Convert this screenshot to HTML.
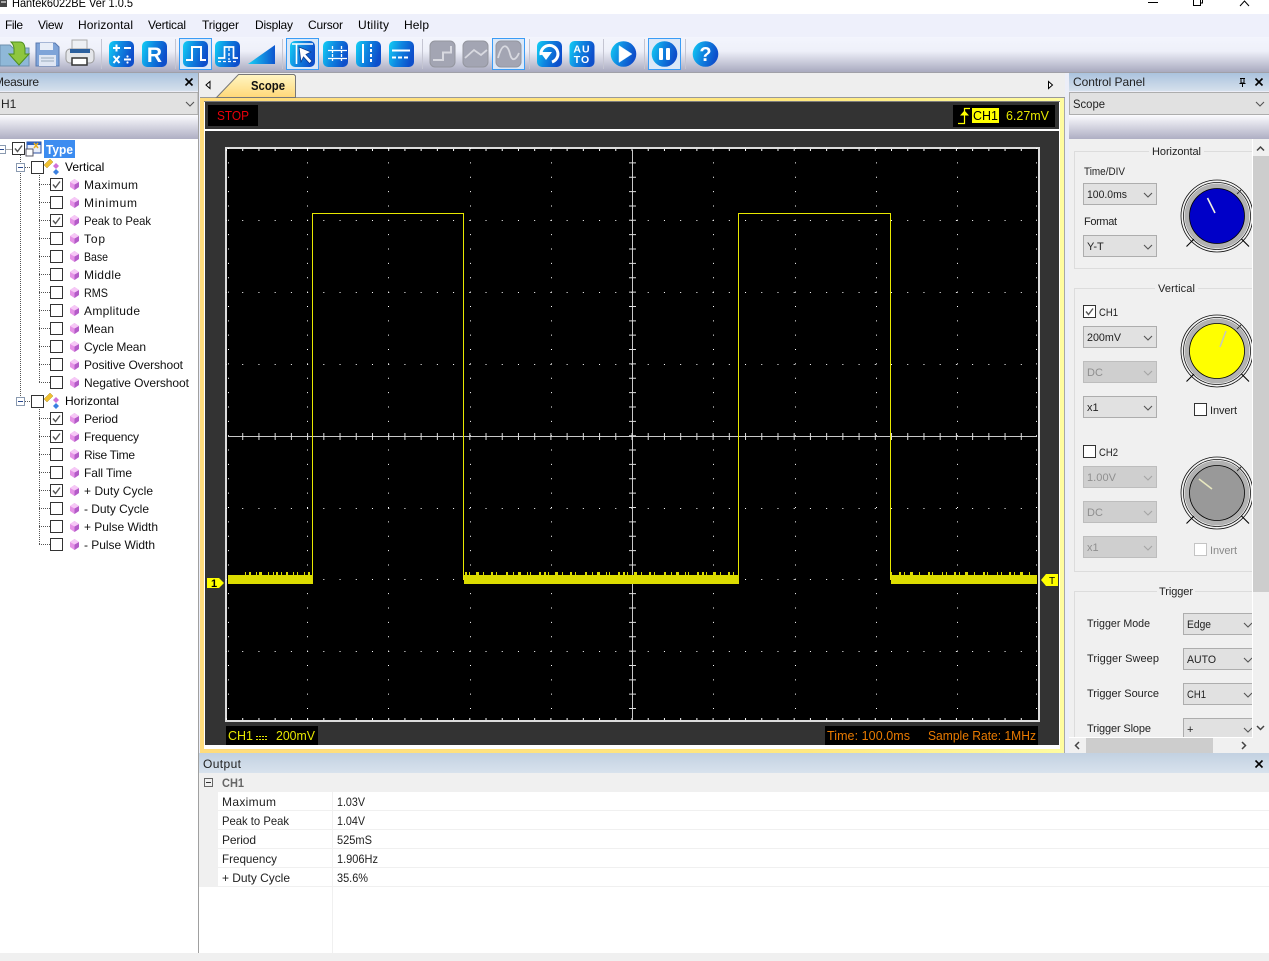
<!DOCTYPE html>
<html><head><meta charset="utf-8"><title>Hantek6022BE</title>
<style>
html,body{margin:0;padding:0;background:#fff;overflow:hidden}
svg{display:block;font-family:"Liberation Sans",sans-serif;font-size:12px}
</style></head><body>
<svg width="1269" height="961" viewBox="0 0 1269 961" xmlns="http://www.w3.org/2000/svg">
<defs>
<linearGradient id="tb" x1="0" y1="0" x2="0" y2="1"><stop offset="0" stop-color="#f3f5fd"/><stop offset=".4" stop-color="#eef0f9"/><stop offset="1" stop-color="#a9aabf"/></linearGradient>
<linearGradient id="hd" x1="0" y1="0" x2="0" y2="1"><stop offset="0" stop-color="#abc3de"/><stop offset="1" stop-color="#d5e0ec"/></linearGradient>
<linearGradient id="hd2" x1="0" y1="0" x2="0" y2="1"><stop offset="0" stop-color="#c2d1e1"/><stop offset="1" stop-color="#d8e2ed"/></linearGradient>
<linearGradient id="gb" x1="0" y1="0" x2="0" y2="1"><stop offset="0" stop-color="#fbfbfe"/><stop offset="1" stop-color="#aeaec3"/></linearGradient>
<linearGradient id="bl" x1="0" y1="0" x2="1" y2=".3"><stop offset="0" stop-color="#12d0f5"/><stop offset=".5" stop-color="#0f86e0"/><stop offset="1" stop-color="#0e4fcb"/></linearGradient>
<linearGradient id="fr" x1="0" y1="0" x2="1" y2="0"><stop offset="0" stop-color="#ffdc7c"/><stop offset=".7" stop-color="#ffe880"/><stop offset="1" stop-color="#fffca0"/></linearGradient>
<linearGradient id="tab" x1="0" y1="0" x2="0" y2="1"><stop offset="0" stop-color="#fff6c4"/><stop offset="1" stop-color="#ffd878"/></linearGradient>
<linearGradient id="tri" x1="0" y1="0" x2="1" y2="0"><stop offset="0" stop-color="#19d0f5"/><stop offset="1" stop-color="#0e55cf"/></linearGradient>
<clipPath id="cp"><rect x="1069" y="139" width="183" height="598"/></clipPath>
<rect id="bt" width="25" height="26" rx="5" fill="url(#bl)"/>
<rect id="bg" width="25" height="26" rx="5" fill="#a3a5b3" stroke="#94969f"/>
<g id="cb"><rect x=".5" y=".5" width="12" height="12" fill="#fff" stroke="#333"/></g>
<g id="ck"><rect x=".5" y=".5" width="12" height="12" fill="#fff" stroke="#333"/><polyline points="3,6.5 5.5,9.5 10,3.5" fill="none" stroke="#555" stroke-width="1.4"/></g>
<g id="di"><g transform="translate(0,-1)"><path d="M4.500 0L9 3V8L4.500 11L0 8V3Z" fill="#e592e6"/><path d="M4.500 5.500L9 3V8L4.500 11Z" fill="#b45cc8"/><path d="M4.500 0L9 3L4.500 5.500L0 3Z" fill="#f6c8f6"/></g></g>
<g id="ex"><rect x=".5" y=".5" width="8" height="8" fill="#fff" stroke="#8a9ab0"/><path d="M2 4.500H7" stroke="#2a4a90"/></g>
<g id="ch"><polyline points="0,0 4,4 8,0" fill="none" stroke="#555" stroke-width="1.1"/></g>
<g id="chd"><polyline points="0,0 4,4 8,0" fill="none" stroke="#a5a5a5" stroke-width="1.1"/></g>
<g id="cico"><path d="M0 6L6 0L9 3L3 9Z" fill="#f0c030" stroke="#a08020" stroke-width=".4"/><path d="M12 4L15 7L12 10L9 7Z" fill="#d070d8"/><path d="M12 10L15 13L12 16L9 13Z" fill="#3a80e0"/></g>
<g id="rings"><circle r="36" fill="#f4f4f4" stroke="#111" stroke-width=".8"/><circle r="33.500" fill="#fff" stroke="#111" stroke-width=".8"/><circle r="32.500" fill="#b2b2b2"/><path d="M-23 23L-30.500 30.500" stroke="#000" stroke-width="1.100"/><path d="M24.500 23L32 30.500" stroke="#000" stroke-width="1.100"/><path d="M20 -22L24 -26" stroke="#333"/></g>
</defs>

<!-- base -->
<rect width="1269" height="961" fill="#fff"/>
<rect y="14" width="1269" height="23" fill="#eef0fb"/>
<rect y="37" width="1269" height="35" fill="url(#tb)"/>
<rect y="72" width="1269" height="1" fill="#a0a0a8"/>
<rect y="73" width="1269" height="880" fill="#eceef8"/>

<!-- title bar -->
<rect x="0" y="0" width="7" height="7" fill="#444"/>
<rect x="1" y="1" width="5" height="2" fill="#aaa"/>
<text x="12" y="7" fill="#000" textLength="121" lengthAdjust="spacingAndGlyphs">Hantek6022BE Ver 1.0.5</text>
<path d="M1148 2.500H1158" stroke="#000"/>
<path d="M1193.500 0V5.500H1200.500V0M1200.500 3H1202.500V0" fill="none" stroke="#000"/>
<path d="M1240 6L1244.500 1L1249 6" fill="none" stroke="#000"/>

<!-- menu -->
<g fill="#000">
<text x="5" y="29" textLength="18">File</text><text x="38" y="29" textLength="25">View</text><text x="78" y="29" textLength="55">Horizontal</text><text x="148" y="29" textLength="38">Vertical</text><text x="202" y="29" textLength="37">Trigger</text><text x="255" y="29" textLength="38">Display</text><text x="308" y="29" textLength="35">Cursor</text><text x="358" y="29" textLength="31">Utility</text><text x="404" y="29" textLength="25">Help</text>
</g>

<!-- toolbar separators -->
<g fill="#c4c5d2">
<rect x="101" y="39" width="1" height="30"/><rect x="175" y="39" width="1" height="30"/><rect x="282" y="39" width="1" height="30"/><rect x="422" y="39" width="1" height="30"/><rect x="529" y="39" width="1" height="30"/><rect x="603" y="39" width="1" height="30"/><rect x="644" y="39" width="1" height="30"/><rect x="685" y="39" width="1" height="30"/>
</g>
<!-- pressed -->
<g fill="#dbe8f8" stroke="#3b9cf5">
<rect x="179.500" y="38.500" width="32" height="31"/><rect x="286.500" y="38.500" width="32" height="31"/><rect x="492.500" y="38.500" width="32" height="31"/><rect x="648.500" y="38.500" width="32" height="31"/>
</g>
<!-- folder -->
<path d="M0 45H10L13 48H29V66H0Z" fill="#8fb8d8" stroke="#6d8fae"/>
<path d="M11 42H20C24 42 25 46 25 50V54H29L19 65L9 54H14V49C14 46 13 44 11 42Z" fill="#8ec63f" stroke="#4f8f1f"/>
<!-- floppy -->
<path d="M36 43H55L59 47V66H36Z" fill="#7fa4d8" stroke="#5a7ab0"/>
<rect x="40" y="43" width="13" height="7" fill="#e8eef8"/><rect x="39" y="55" width="17" height="11" fill="#dfe6f3"/><path d="M41 58H54M41 61H54" stroke="#9ab"/>
<!-- printer -->
<rect x="72" y="40" width="15" height="10" fill="#eef0f4" stroke="#aaa"/>
<rect x="66" y="49" width="28" height="14" rx="4" fill="#e4e6ea" stroke="#999"/>
<rect x="70" y="49" width="20" height="4" fill="#2a5f9e"/>
<rect x="72" y="58" width="15" height="7" fill="#fff" stroke="#333" stroke-width="1.500"/>

<!-- calc -->
<use href="#bt" x="109" y="41"/>
<g stroke="#fff" stroke-width="2" fill="none"><path d="M113 48H120M116.500 44.500V51.500M124 48H131M113.500 56L119.500 63M119.500 56L113.500 63M124 59.500H131"/></g>
<circle cx="127.500" cy="56.500" r="1.100" fill="#fff"/><circle cx="127.500" cy="62.500" r="1.100" fill="#fff"/>
<use href="#bt" x="142" y="41"/>
<text x="154.500" y="62" text-anchor="middle" fill="#fff" font-weight="bold" font-size="21">R</text>

<use href="#bt" x="183" y="41"/>
<path d="M186 60H192V47H201V60H206" fill="none" stroke="#fff" stroke-width="2"/>
<use href="#bt" x="215" y="41"/>
<path d="M218 58H224.500V47H233.500V58H238" fill="none" stroke="#fff" stroke-width="1.700"/>
<path d="M229 48V60M218 61.500H238" fill="none" stroke="#fff" stroke-width="1.300" stroke-dasharray="3 2"/>
<path d="M248 64L275 45V64Z" fill="url(#tri)"/>

<use href="#bt" x="290" y="41"/>
<path d="M292 44H313M296.500 44V64" stroke="#fff" stroke-width="1.600" fill="none"/>
<path d="M299 47L311 52L306 54.500L312 61L309.500 63.500L303.500 57L301 62Z" fill="#fff" stroke="#0c3a90" stroke-width=".8"/>
<use href="#bt" x="323" y="41"/>
<g stroke="#fff" stroke-width="1.300" fill="none"><path d="M332.500 46V62M341.500 46V62" stroke-dasharray="3 1"/><path d="M328 50.500H347M328 58.500H347"/></g>
<use href="#bt" x="356" y="41"/>
<g stroke="#fff" stroke-width="2" fill="none"><path d="M363 44V63"/><path d="M371 44V63" stroke-dasharray="3 2"/></g>
<use href="#bt" x="389" y="41"/>
<g stroke="#fff" stroke-width="2" fill="none"><path d="M392 50.500H410"/><path d="M392 57.500H410" stroke-dasharray="4 2"/></g>

<use href="#bg" x="430" y="41"/>
<path d="M433 60H443V52.500H451V46" fill="none" stroke="#d8d9e0" stroke-width="2"/>
<use href="#bg" x="463" y="41"/>
<path d="M465 58L474 50L481 55L487 50" fill="none" stroke="#d8d9e0" stroke-width="1.800"/>
<use href="#bg" x="496" y="41"/>
<path d="M498 58C503 40 508 46 510 54C512 62 516 60 519 53" fill="none" stroke="#d8d9e0" stroke-width="1.800"/>

<use href="#bt" x="537" y="41"/>
<path d="M541 55A8.500 8.500 0 1 1 552 62" fill="none" stroke="#fff" stroke-width="3"/>
<path d="M540 52H552L546 60Z" fill="#fff"/>
<use href="#bt" x="569.500" y="41"/>
<text x="582" y="52.500" text-anchor="middle" fill="#fff" font-weight="bold" font-size="10.500" letter-spacing="1">AU</text>
<text x="582" y="63" text-anchor="middle" fill="#fff" font-weight="bold" font-size="10.500" letter-spacing="1">TO</text>

<circle cx="623.500" cy="54" r="12.800" fill="url(#bl)"/>
<path d="M619 45.500L632 54L619 62.500Z" fill="#fff" stroke="#cdefff" stroke-width=".5"/>
<circle cx="664.500" cy="54" r="12.800" fill="url(#bl)"/>
<rect x="659" y="48" width="4" height="12" rx="1" fill="#fff"/><rect x="666" y="48" width="4" height="12" rx="1" fill="#fff"/>
<circle cx="705.500" cy="54" r="12.800" fill="url(#bl)"/>
<text x="705.500" y="61" text-anchor="middle" fill="#fff" font-weight="bold" font-size="20">?</text>

<!-- LEFT PANEL -->
<rect x="0" y="73" width="198" height="18" fill="url(#hd)"/>
<text x="-6" y="86" font-size="12" fill="#222" textLength="45">Measure</text>
<path d="M185.500 78.500L192.500 85.500M192.500 78.500L185.500 85.500" stroke="#000" stroke-width="1.600"/>
<rect x="-2" y="92.500" width="200" height="22" fill="#e1e1e1" stroke="#adadad"/>
<text x="1" y="108" fill="#222">H1</text>
<use href="#ch" x="186" y="102"/>
<rect x="0" y="115" width="198" height="24" fill="url(#gb)"/>
<rect x="0" y="139" width="198" height="814" fill="#fff"/>
<rect x="198" y="73" width="1" height="880" fill="#a0a0a0"/>

<!-- tree lines -->
<g stroke="#555" stroke-dasharray="1 1" fill="none">
<path d="M5.500 149.500H12M20.500 155V401M25 167.500H31M25 401.500H31M39.500 175V383M39.500 409V545"/>
<path d="M39 184.500H50M39 202.500H50M39 220.500H50M39 238.500H50M39 256.500H50M39 274.500H50M39 292.500H50M39 310.500H50M39 328.500H50M39 346.500H50M39 364.500H50M39 382.500H50M39 418.500H50M39 436.500H50M39 454.500H50M39 472.500H50M39 490.500H50M39 508.500H50M39 526.500H50M39 544.500H50"/>
</g>
<use href="#ex" x="-3" y="145"/>
<use href="#ck" x="12" y="142"/>
<rect x="27" y="142" width="14" height="11" fill="#e8eefa" stroke="#2a4fa0"/><rect x="27" y="142" width="14" height="3" fill="#2a5fc0"/><path d="M34 143L38 148M38 143L34 148" stroke="#e8b020" stroke-width="1.500"/><rect x="26" y="149" width="7" height="7" fill="#fff" stroke="#556"/>
<rect x="44" y="140" width="31" height="18" fill="#3c8cf0"/>
<text x="46" y="154" fill="#fff" font-weight="bold" font-size="13" textLength="27" lengthAdjust="spacingAndGlyphs">Type</text>

<use href="#ex" x="16" y="163"/><use href="#cb" x="31" y="161"/><use href="#cico" x="44" y="159"/>
<text x="65" y="171">Vertical</text>
<use href="#ex" x="16" y="397"/><use href="#cb" x="31" y="395"/><use href="#cico" x="44" y="393"/>
<text x="65" y="405">Horizontal</text>

<use href="#ck" x="50" y="178"/><use href="#cb" x="50" y="196"/><use href="#ck" x="50" y="214"/><use href="#cb" x="50" y="232"/><use href="#cb" x="50" y="250"/><use href="#cb" x="50" y="268"/><use href="#cb" x="50" y="286"/><use href="#cb" x="50" y="304"/><use href="#cb" x="50" y="322"/><use href="#cb" x="50" y="340"/><use href="#cb" x="50" y="358"/><use href="#cb" x="50" y="376"/>
<use href="#ck" x="50" y="412"/><use href="#ck" x="50" y="430"/><use href="#cb" x="50" y="448"/><use href="#cb" x="50" y="466"/><use href="#ck" x="50" y="484"/><use href="#cb" x="50" y="502"/><use href="#cb" x="50" y="520"/><use href="#cb" x="50" y="538"/>
<use href="#di" x="70" y="180"/><use href="#di" x="70" y="198"/><use href="#di" x="70" y="216"/><use href="#di" x="70" y="234"/><use href="#di" x="70" y="252"/><use href="#di" x="70" y="270"/><use href="#di" x="70" y="288"/><use href="#di" x="70" y="306"/><use href="#di" x="70" y="324"/><use href="#di" x="70" y="342"/><use href="#di" x="70" y="360"/><use href="#di" x="70" y="378"/>
<use href="#di" x="70" y="414"/><use href="#di" x="70" y="432"/><use href="#di" x="70" y="450"/><use href="#di" x="70" y="468"/><use href="#di" x="70" y="486"/><use href="#di" x="70" y="504"/><use href="#di" x="70" y="522"/><use href="#di" x="70" y="540"/>
<g fill="#111">
<text x="84" y="189" textLength="54">Maximum</text><text x="84" y="207" textLength="53">Minimum</text><text x="84" y="225" textLength="67" lengthAdjust="spacingAndGlyphs">Peak to Peak</text><text x="84" y="243" textLength="21">Top</text><text x="84" y="261" textLength="24" lengthAdjust="spacingAndGlyphs">Base</text><text x="84" y="279" textLength="37">Middle</text><text x="84" y="297" textLength="24" lengthAdjust="spacingAndGlyphs">RMS</text><text x="84" y="315" textLength="56">Amplitude</text><text x="84" y="333" textLength="30">Mean</text><text x="84" y="351" textLength="62">Cycle Mean</text><text x="84" y="369" textLength="99">Positive Overshoot</text><text x="84" y="387" textLength="105">Negative Overshoot</text>
<text x="84" y="423" textLength="34">Period</text><text x="84" y="441" textLength="55">Frequency</text><text x="84" y="459" textLength="51">Rise Time</text><text x="84" y="477" textLength="48">Fall Time</text><text x="84" y="495" textLength="69">+ Duty Cycle</text><text x="84" y="513" textLength="65">- Duty Cycle</text><text x="84" y="531" textLength="74">+ Pulse Width</text><text x="84" y="549" textLength="71">- Pulse Width</text>
</g>

<!-- TAB STRIP -->
<rect x="200" y="73" width="865" height="24" fill="#eeeeee"/>
<rect x="200" y="97" width="865" height="1" fill="#999"/>
<path d="M216.500 97.500L238.500 74.500H294L295.500 76V97.500Z" fill="url(#tab)" stroke="#777"/>
<text x="251" y="90" font-weight="bold" font-size="12.500" fill="#111" textLength="34" lengthAdjust="spacingAndGlyphs">Scope</text>
<path d="M210 81.500V88.500L206 85Z" fill="#fff" stroke="#000"/>
<path d="M1048.500 81.500V88.500L1052.500 85Z" fill="#fff" stroke="#000"/>

<!-- SCOPE FRAME -->
<rect x="200" y="98" width="865" height="655" fill="url(#fr)"/>
<rect x="1064" y="98" width="1" height="655" fill="#a8a8a8"/>
<rect x="204" y="101" width="856" height="648" fill="#fff"/>
<rect x="204" y="101" width="856" height="1" fill="#7c7c7c"/>
<rect x="205" y="102" width="854" height="643" fill="#333"/>
<rect x="205" y="129" width="854" height="2" fill="#fff"/>
<rect x="208" y="105" width="50" height="21" fill="#000"/>
<text x="217" y="120" font-size="13" fill="#e8000a" textLength="32" lengthAdjust="spacingAndGlyphs">STOP</text>
<rect x="953" y="105" width="102" height="22" fill="#000"/>
<path d="M958 123.500H964.500V108.500H970" fill="none" stroke="#ffff00" stroke-width="1.200"/>
<path d="M960 115.500H969L964.500 110.500Z" fill="#ffff00"/>
<rect x="972" y="108" width="27" height="15" fill="#ffff00"/>
<text x="973" y="120" font-size="13" fill="#000" textLength="25" lengthAdjust="spacingAndGlyphs">CH1</text>
<text x="1006" y="120" font-size="12.500" fill="#e6e600" textLength="43" lengthAdjust="spacingAndGlyphs">6.27mV</text>

<!-- screen -->
<rect x="226" y="148" width="813" height="573" fill="#000" stroke="#ddd" stroke-width="2"/>
<g stroke="#fff" fill="none">
<g stroke-dasharray="1 13.360">
<path d="M307.500 148V720M388.500 148V720M470.500 148V720M551.500 148V720M713.500 148V720M795.500 148V720M876.500 148V720M957.500 148V720M228.500 148V720"/>
<path d="M1036.500 148V720"/>
</g>
<g stroke-dasharray="1 15.220">
<path d="M226 220.500H1037M226 292.500H1037M226 364.500H1037M226 508.500H1037M226 579.500H1037M226 651.500H1037"/>
<path d="M226 150H1037M226 719H1037" stroke-width="2"/>
</g>
<path d="M228 436.500H1037M632.500 150V720" stroke="#c8c8c8"/>
<path d="M226 436.500H1037" stroke="#ddd" stroke-width="7" stroke-dasharray="1 15.220"/>
<path d="M632.500 148V720" stroke="#ddd" stroke-width="7" stroke-dasharray="1 13.360"/>
</g>
<!-- waveform -->
<g fill="none" stroke="#e8e800">
<path d="M312.500 580V213.500H463.500V580M738.500 580V213.500H890.500V580"/>
</g>
<g fill="#dcdc00">
<rect x="228" y="575" width="85" height="9"/><rect x="464" y="575" width="275" height="9"/><rect x="891" y="575" width="146" height="9"/>
</g>
<g fill="none" stroke="#dcdc00" stroke-width="3">
<path d="M245 573.500H313" stroke-dasharray="1 3 2 5 1 2 3 6 1 4 1 2 2 3 1 4 2 5 1 3 1 6"/>
<path d="M465 573.500H738" stroke-dasharray="2 2 1 6 3 4 1 7 2 3 1 9 2 5 1 4 3 6 1 2 1 8 2 3"/>
<path d="M891 573.500H1037" stroke-dasharray="1 7 2 3 1 5 3 6 1 8 2 2 1 9 1 3"/>
</g>
<!-- markers -->
<path d="M207 578H219L224 583L219 588H207Z" fill="#ffff00"/>
<text x="214" y="587" text-anchor="middle" font-size="11" font-weight="bold" fill="#000">1</text>
<path d="M1041 580L1046 574H1058V586H1046Z" fill="#ffff00"/>
<text x="1052" y="584" text-anchor="middle" font-size="10" fill="#000">T</text>
<!-- bottom labels -->
<rect x="226" y="726" width="92" height="19" fill="#000"/>
<text x="228" y="740" font-size="13" fill="#e6e600" textLength="25" lengthAdjust="spacingAndGlyphs">CH1</text>
<path d="M256 736.500H267M256 739.500H267" stroke="#e6e600" stroke-dasharray="2 1"/>
<text x="276" y="740" font-size="13" fill="#e6e600" textLength="39" lengthAdjust="spacingAndGlyphs">200mV</text>
<rect x="825" y="726" width="213" height="19" fill="#000"/>
<text x="827" y="740" font-size="12.500" fill="#e87a00" textLength="83">Time: 100.0ms</text>
<text x="928" y="740" font-size="12.500" fill="#e87a00" textLength="108" lengthAdjust="spacingAndGlyphs">Sample Rate: 1MHz</text>

<!-- RIGHT PANEL -->
<rect x="1069" y="73" width="200" height="18" fill="url(#hd)"/>
<text x="1073" y="86" fill="#222" textLength="72">Control Panel</text>
<path d="M1240 78.500H1245M1241 79V83H1244V79M1239.500 83.500H1245.500M1242.500 84V87" fill="none" stroke="#000"/>
<path d="M1255.500 78.500L1262.500 85.500M1262.500 78.500L1255.500 85.500" stroke="#000" stroke-width="1.600"/>
<rect x="1069.500" y="92.500" width="202" height="22" fill="#e1e1e1" stroke="#adadad"/>
<text x="1073" y="108" fill="#222" textLength="32" lengthAdjust="spacingAndGlyphs">Scope</text>
<use href="#ch" x="1256" y="102"/>
<rect x="1069" y="115" width="200" height="24" fill="url(#gb)"/>
<rect x="1069" y="139" width="200" height="614" fill="#f0f0f0"/>

<g clip-path="url(#cp)">
<g fill="none" stroke="#dcdcdc">
<rect x="1074.500" y="151.500" width="200" height="117"/>
<rect x="1074.500" y="288.500" width="200" height="283"/>
<rect x="1074.500" y="591.500" width="200" height="200"/>
</g>
<g fill="#f0f0f0"><rect x="1149" y="146" width="55" height="10"/><rect x="1155" y="283" width="43" height="10"/><rect x="1157" y="586" width="38" height="10"/></g>
<g font-size="11" fill="#222">
<text x="1152" y="155" textLength="49">Horizontal</text>
<text x="1158" y="292" textLength="37">Vertical</text>
<text x="1159" y="595" textLength="34">Trigger</text>
<text x="1084" y="175" textLength="41" lengthAdjust="spacingAndGlyphs">Time/DIV</text>
<text x="1084" y="225" textLength="33">Format</text>
<text x="1099" y="316" textLength="19" lengthAdjust="spacingAndGlyphs">CH1</text>
<text x="1099" y="456" textLength="19" lengthAdjust="spacingAndGlyphs">CH2</text>
<text x="1210" y="414" textLength="27">Invert</text>
<text x="1210" y="554" fill="#8a8a8a" textLength="27">Invert</text>
<text x="1087" y="627" textLength="63" lengthAdjust="spacingAndGlyphs">Trigger Mode</text>
<text x="1087" y="662" textLength="72">Trigger Sweep</text>
<text x="1087" y="697" textLength="72">Trigger Source</text>
<text x="1087" y="732" textLength="64">Trigger Slope</text>
</g>
<!-- combos -->
<g fill="#e1e1e1" stroke="#adadad">
<rect x="1083.500" y="183.500" width="73" height="21"/>
<rect x="1083.500" y="235.500" width="73" height="21"/>
<rect x="1083.500" y="326.500" width="73" height="21"/>
<rect x="1083.500" y="396.500" width="73" height="21"/>
<rect x="1183.500" y="613.500" width="80" height="21"/>
<rect x="1183.500" y="648.500" width="80" height="21"/>
<rect x="1183.500" y="683.500" width="80" height="21"/>
<rect x="1183.500" y="718.500" width="80" height="21"/>
</g>
<g fill="#cfcfcf" stroke="#bdbdbd">
<rect x="1083.500" y="361.500" width="73" height="21"/>
<rect x="1083.500" y="466.500" width="73" height="21"/>
<rect x="1083.500" y="501.500" width="73" height="21"/>
<rect x="1083.500" y="536.500" width="73" height="21"/>
</g>
<g font-size="11" fill="#222">
<text x="1087" y="198" textLength="40" lengthAdjust="spacingAndGlyphs">100.0ms</text><text x="1087" y="250">Y-T</text><text x="1087" y="341" textLength="34" lengthAdjust="spacingAndGlyphs">200mV</text><text x="1087" y="411">x1</text>
<text x="1187" y="628" textLength="24" lengthAdjust="spacingAndGlyphs">Edge</text><text x="1187" y="663" textLength="29" lengthAdjust="spacingAndGlyphs">AUTO</text><text x="1187" y="698" textLength="19" lengthAdjust="spacingAndGlyphs">CH1</text><text x="1187" y="733">+</text>
</g>
<g font-size="11" fill="#8f8f8f">
<text x="1087" y="376">DC</text><text x="1087" y="481" textLength="29">1.00V</text><text x="1087" y="516">DC</text><text x="1087" y="551">x1</text>
</g>
<use href="#ch" x="1144" y="193"/><use href="#ch" x="1144" y="245"/><use href="#ch" x="1144" y="336"/><use href="#ch" x="1144" y="406"/>
<use href="#chd" x="1144" y="371"/><use href="#chd" x="1144" y="476"/><use href="#chd" x="1144" y="511"/><use href="#chd" x="1144" y="546"/>
<use href="#ch" x="1244" y="623"/><use href="#ch" x="1244" y="658"/><use href="#ch" x="1244" y="693"/><use href="#ch" x="1244" y="728"/>
<!-- checkboxes -->
<use href="#ck" x="1083" y="305"/><use href="#cb" x="1083" y="445"/><use href="#cb" x="1194" y="403"/>
<rect x="1194.500" y="543.500" width="12" height="12" fill="#fff" stroke="#c4c4c4"/>
<!-- knobs -->
<g transform="translate(1217,216)"><use href="#rings"/><circle r="27.500" fill="#0000c8" stroke="#000" stroke-width=".8"/><path d="M-9.500 -18L-2 -3" stroke="#f0f0e0" stroke-width="1.600"/></g>
<g transform="translate(1217,351)"><use href="#rings"/><circle r="27.500" fill="#ffff00" stroke="#000" stroke-width=".8"/><path d="M9 -20L3 -4" stroke="#c8c8b8" stroke-width="1.600"/></g>
<g transform="translate(1217,493)"><use href="#rings"/><circle r="27.500" fill="#999" stroke="#000" stroke-width=".8"/><path d="M-18 -14L-5 -4" stroke="#e8e8c0" stroke-width="1.600"/></g>
</g>

<!-- scrollbars -->
<rect x="1252" y="139" width="1" height="598" fill="#fff"/>
<rect x="1253" y="139" width="16" height="598" fill="#f0f0f0"/>
<rect x="1253" y="156" width="16" height="436" fill="#cdcdcd"/>
<polyline points="1257,150.500 1260.500,147 1264,150.500" fill="none" stroke="#444" stroke-width="1.500"/>
<polyline points="1257,726 1260.500,729.500 1264,726" fill="none" stroke="#444" stroke-width="1.500"/>
<rect x="1069" y="737" width="200" height="16" fill="#f0f0f0"/>
<rect x="1069" y="737" width="184" height="1" fill="#fff"/>
<rect x="1086" y="738" width="127" height="15" fill="#cdcdcd"/>
<polyline points="1079,742 1075.500,745.500 1079,749" fill="none" stroke="#444" stroke-width="1.500"/>
<polyline points="1242,742 1245.500,745.500 1242,749" fill="none" stroke="#444" stroke-width="1.500"/>

<!-- OUTPUT -->
<rect x="199" y="753" width="1070" height="20" fill="url(#hd2)"/>
<text x="203" y="768" fill="#222" textLength="38">Output</text>
<path d="M1255.500 760.500L1262.500 767.500M1262.500 760.500L1255.500 767.500" stroke="#000" stroke-width="1.600"/>
<rect x="199" y="773" width="1070" height="180" fill="#fff"/>
<rect x="199" y="773" width="1070" height="19" fill="#f0f0f0"/>
<rect x="199" y="792" width="19" height="95" fill="#f0f0f0"/>
<rect x="198" y="753" width="1" height="200" fill="#a0a0a0"/>
<g fill="#f0f0f0">
<rect x="218" y="810" width="1051" height="1"/><rect x="218" y="829" width="1051" height="1"/><rect x="218" y="848" width="1051" height="1"/><rect x="218" y="867" width="1051" height="1"/><rect x="218" y="886" width="1051" height="1"/>
<rect x="332" y="792" width="1" height="161"/>
</g>
<rect x="204.500" y="778.500" width="8" height="8" fill="#f0f0f0" stroke="#666"/><path d="M206 782.500H211" stroke="#333"/>
<text x="222" y="787" font-weight="bold" fill="#666" textLength="22" lengthAdjust="spacingAndGlyphs">CH1</text>
<g fill="#222">
<text x="222" y="806" textLength="54">Maximum</text><text x="337" y="806" textLength="28" lengthAdjust="spacingAndGlyphs">1.03V</text>
<text x="222" y="825" textLength="67" lengthAdjust="spacingAndGlyphs">Peak to Peak</text><text x="337" y="825" textLength="28" lengthAdjust="spacingAndGlyphs">1.04V</text>
<text x="222" y="844" textLength="34">Period</text><text x="337" y="844" textLength="35" lengthAdjust="spacingAndGlyphs">525mS</text>
<text x="222" y="863" textLength="55" lengthAdjust="spacingAndGlyphs">Frequency</text><text x="337" y="863" textLength="41" lengthAdjust="spacingAndGlyphs">1.906Hz</text>
<text x="222" y="882" textLength="68">+ Duty Cycle</text><text x="337" y="882" textLength="31" lengthAdjust="spacingAndGlyphs">35.6%</text>
</g>
<rect x="0" y="953" width="1269" height="8" fill="#f0f0f0"/>
</svg>
</body></html>
